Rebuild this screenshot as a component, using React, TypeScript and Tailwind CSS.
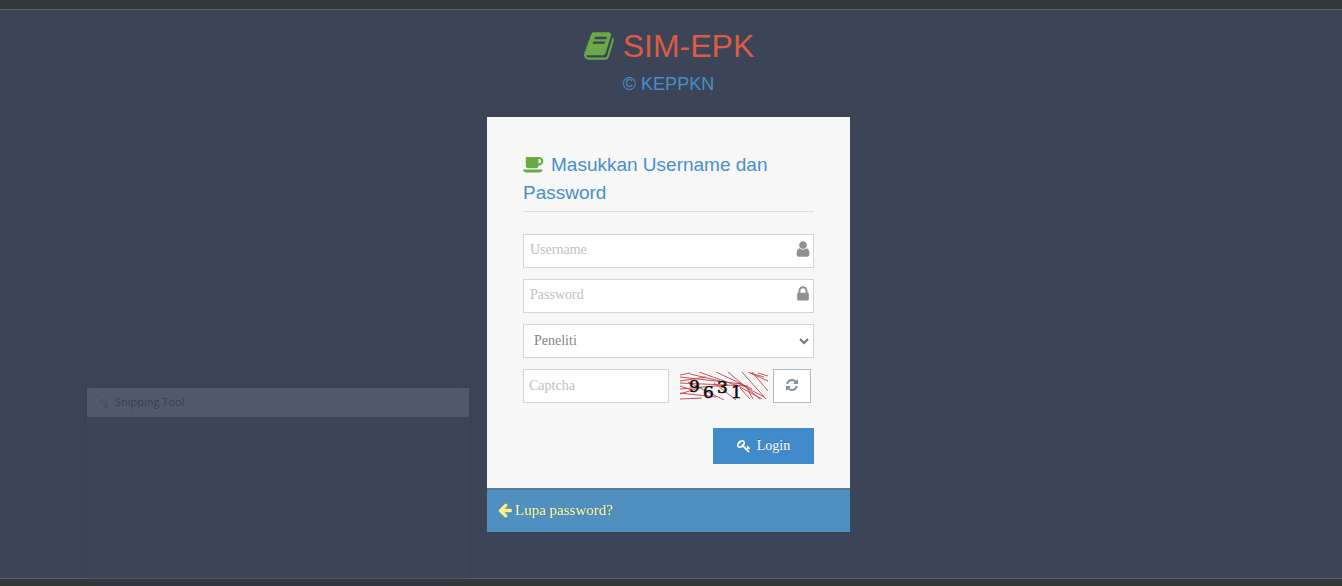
import React, { useState } from "react";

type IconProps = { className?: string };

function Glyph({ d, className, viewBox = "0 0 1792 1792" }: IconProps & { d: string; viewBox?: string }) {
  return (
    <svg viewBox={viewBox} fill="currentColor" aria-hidden="true" className={className}>
      <path d={d} />
    </svg>
  );
}

const BOOK =
  "M1703 478q40 57 18 129l-275 906q-19 64-76.5 107.5t-122.5 43.5h-923q-77 0-148.5-53.5t-99.5-131.5q-24-67-2-127 0-4 3-27t4-37q1-8-3-21.5t-3-19.5q2-11 8-21t16.5-23.5 16.5-23.5q23-38 45-91.5t30-91.5q3-10 .5-30t-.5-28q3-11 17-28t17-23q21-36 42-92t25-90q1-9-2.5-32t.5-28q4-13 22-30.5t22-22.5q19-26 42.5-84.5t27.5-96.5q1-8-3-25.5t-2-26.5q2-8 9-18t18-23 17-21q8-12 16.5-30.5t15-35 16-36 19.5-32 26.5-23.5 36-11.5 47.5 5.5l-1 3q38-9 51-9h761q74 0 114 56t18 130l-274 906q-36 119-71.5 153.5t-128.5 34.5h-869q-27 0-38 15-11 16-1 43 24 70 144 70h923q29 0 56-15.5t35-41.5l300-987q7-22 5-57 38 15 59 43zm-1064 2q-4 13 2 22.5t20 9.5h608q13 0 25.5-9.5t16.5-22.5l21-64q4-13-2-22.5t-20-9.5h-608q-13 0-25.5 9.5t-16.5 22.5zm-83 256q-4 13 2 22.5t20 9.5h608q13 0 25.5-9.5t16.5-22.5l21-64q4-13-2-22.5t-20-9.5h-608q-13 0-25.5 9.5t-16.5 22.5z";
const COFFEE =
  "M1664 640q0-80-56-136t-136-56h-64v384h64q80 0 136-56t56-136zm-1664 768h1792q0 106-75 181t-181 75h-1280q-106 0-181-75t-75-181zm1856-768q0 159-112.5 271.5t-271.5 112.5h-64v32q0 92-66 158t-158 66h-704q-92 0-158-66t-66-158v-736q0-26 19-45t45-19h1152q159 0 271.5 112.5t112.5 271.5z";
const USER =
  "M1536 1399q0 109-62.5 187t-150.5 78h-854q-88 0-150.5-78t-62.5-187q0-85 8.5-160.5t31.5-152 58.5-131 94-89 134.5-34.5q131 128 313 128t313-128q76 0 134.5 34.5t94 89 58.5 131 31.5 152 8.5 160.5zm-256-887q0 159-112.5 271.5t-271.5 112.5-271.5-112.5-112.5-271.5 112.5-271.5 271.5-112.5 271.5 112.5 112.5 271.5z";
const LOCK =
  "M640 768h512v-192q0-106-75-181t-181-75-181 75-75 181v192zm832 96v576q0 40-28 68t-68 28h-960q-40 0-68-28t-28-68v-576q0-40 28-68t68-28h32v-192q0-184 132-316t316-132 316 132 132 316v192h32q40 0 68 28t28 68z";
const REFRESH =
  "M1639 1056q0 5-1 7-64 268-268 434.5t-478 166.5q-146 0-282.5-55t-243.5-157l-129 129q-19 19-45 19t-45-19-19-45v-448q0-26 19-45t45-19h448q26 0 45 19t19 45-19 45l-137 137q71 66 161 102t187 36q134 0 250-65t186-179q11-17 53-117 8-23 30-23h192q13 0 22.5 9.5t9.5 22.5zm25-800v448q0 26-19 45t-45 19h-448q-26 0-45-19t-19-45 19-45l138-138q-148-137-349-137-134 0-250 65t-186 179q-11 17-53 117-8 23-30 23h-199q-13 0-22.5-9.5t-9.5-22.5v-7q65-268 270-434.5t480-166.5q146 0 284 55.5t245 156.5l130-129q19-19 45-19t45 19 19 45z";
const KEY =
  "M832 512q0-80-56-136t-136-56-136 56-56 136q0 42 19 83-41-19-83-19-80 0-136 56t-56 136 56 136 136 56 136-56 56-136q0-42-19-83 41 19 83 19 80 0 136-56t56-136zm851 704q0 17-49 66t-66 49q-9 0-28.5-16t-36.5-33-38.5-40-24.5-26l-96 96 220 220q28 28 28 68 0 42-39 81t-81 39q-40 0-68-28l-671-671q-176 131-365 131-163 0-265.5-102.5t-102.5-265.5q0-160 95-313t248-248 313-95q163 0 265.5 102.5t102.5 265.5q0 189-131 365l355 355 96-96q-3-3-26-24.5t-40-38.5-33-36.5-16-28.5q0-17 49-66t66-49q13 0 23 10 6 6 46 44.5t82 79.5 86.5 86 73 78 28.5 41z";
const ARROW_LEFT =
  "M1664 896v128q0 53-32.5 90.5t-84.5 37.5h-704l293 294q38 36 38 90t-38 90l-75 76q-37 37-90 37-52 0-91-37l-651-652q-37-37-37-90 0-52 37-91l651-650q38-38 91-38 52 0 90 38l75 74q38 38 38 91t-38 91l-293 293h704q52 0 84.5 37.5t32.5 90.5z";

function Captcha() {
  return (
    <svg viewBox="0 0 88 28" className="h-7 w-[88px] shrink-0" role="img" aria-label="Captcha 9631">
      <g stroke="#c4404a" strokeWidth="0.9" fill="none">
        <path d="M0 3L10 1M0 9L26 5M0 5L62 12M0 11L68 14M0 17L48 13M0 22L22 15M0 21L36 25M0 27L22 26M36 0L72 17M19 0L58 14L82 27M48 0L80 27M62 0L86 27M68 0L88 9M72 0L88 19M78 1L88 4M70 1L84 5M58 11L84 25M8 10L44 28M10 2L40 9M34 11L56 28M60 16L70 27M67 16L73 27M0 14L12 18" />
      </g>
      <g fill="#0a0a0a" stroke="#0a0a0a" strokeWidth="0.5" fontFamily="DejaVu Serif, serif" fontSize="17">
        <text x="9" y="20">9</text>
        <text x="23" y="26">6</text>
        <text x="37" y="21">3</text>
        <text x="51" y="26">1</text>
      </g>
    </svg>
  );
}

function SnippingGhost() {
  return (
    <div className="pointer-events-none absolute top-[378px] bottom-0 left-[87px] w-[382px] bg-[#3c4556] shadow-[0_0_6px_#37414f]">
      <div className="flex h-[29px] items-center gap-1 bg-[#4f596a] pl-2 font-['Open_Sans',sans-serif] text-[11px] text-[#363f4f]">
        <svg viewBox="0 0 16 16" className="size-4 shrink-0" fill="none" aria-hidden="true">
          <ellipse cx="8" cy="6.5" rx="6.5" ry="4.5" stroke="#605968" strokeWidth="1.5" />
          <path d="M2 10L10 3M5 5L13 13M14 2L9 9" stroke="#48536c" strokeWidth="1.3" />
          <circle cx="11" cy="11" r="2" stroke="#414b61" />
          <circle cx="3" cy="10" r="2" stroke="#65596a" />
        </svg>
        <span>Snipping Tool</span>
      </div>
    </div>
  );
}

const field =
  "block h-[34px] w-full rounded-none border border-[#d5d5d5] bg-white text-sm text-[#858585] outline-none placeholder:text-[#c0c0c0] focus:border-[#f59942]";

export default function App() {
  const [role, setRole] = useState("Peneliti");

  return (
    <div className="flex min-h-screen flex-col bg-[#3b4557] font-['Liberation_Serif',serif]">
      <div className="h-[10px] border-b border-[#5e626a] bg-[#353738]" />
      <main className="relative flex flex-1 flex-col items-center pt-4 pr-[5px] pb-[46px]">
        <SnippingGhost />
        <header className="relative flex flex-col items-center font-['Liberation_Sans',sans-serif]">
          <h1 className="flex items-center gap-2 text-[32px] leading-10 text-[#dd5a43]">
            <Glyph d={BOOK} className="size-8 text-[#69aa46]" />
            SIM-EPK
          </h1>
          <h4 className="mt-[6px] text-lg leading-6 text-[#478fca]">© KEPPKN</h4>
        </header>

        <section className="relative mt-[21px] w-full max-w-[363px] bg-[#f7f7f7]">
          <form className="px-9 pt-[34px] pb-6" onSubmit={(e) => e.preventDefault()}>
            <h4 className="border-b border-[#d5e3ef] pb-1 font-['Liberation_Sans',sans-serif] text-[19px] leading-7 text-[#478fca]">
              <Glyph
                d={COFFEE}
                viewBox="0 0 1920 1792"
                className="mr-[7px] inline-block h-5 w-[21px] align-[-3px] text-[#69aa46]"
              />
              Masukkan Username dan Password
            </h4>

            <div className="mt-[22px] flex flex-col gap-[11px]">
              <div className="relative">
                <input
                  type="text"
                  aria-label="Username"
                  placeholder="Username"
                  className={`${field} pr-7 pb-[2px] pl-[6px]`}
                />
                <Glyph d={USER} className="pointer-events-none absolute top-[6px] right-[2px] size-[18px] text-[#909090]" />
              </div>
              <div className="relative">
                <input
                  type="password"
                  aria-label="Password"
                  placeholder="Password"
                  className={`${field} pr-7 pb-[2px] pl-[6px]`}
                />
                <Glyph d={LOCK} className="pointer-events-none absolute top-[6px] right-[2px] size-[18px] text-[#909090]" />
              </div>
              <div className="relative">
                <select
                  aria-label="Level"
                  value={role}
                  onChange={(e) => setRole(e.target.value)}
                  className={`${field} appearance-none pr-7 pl-[10px]`}
                >
                  <option>Peneliti</option>
                </select>
                <svg
                  viewBox="0 0 10 7"
                  fill="none"
                  aria-hidden="true"
                  className="pointer-events-none absolute top-[14px] right-[5px] h-[7px] w-[10px]"
                >
                  <path d="M1 1L5 5L9 1" stroke="#747474" strokeWidth="2" />
                </svg>
              </div>
              <div className="flex items-center">
                <div className="w-[146px]">
                  <input type="text" aria-label="Captcha" placeholder="Captcha" className={`${field} px-[5px]`} />
                </div>
                <div className="ml-[11px] flex items-center gap-[5px]">
                  <Captcha />
                  <button
                    type="button"
                    aria-label="Muat ulang captcha"
                    className="flex h-[34px] w-[38px] cursor-pointer items-center justify-center border border-[#abbac3] bg-white pb-[2px] text-[#8090a0]"
                  >
                    <Glyph d={REFRESH} className="size-[14px]" />
                  </button>
                </div>
              </div>
            </div>

            <div className="mt-[25px] flex justify-end">
              <button
                type="submit"
                className="flex h-9 w-[101px] cursor-pointer items-center justify-center gap-[6px] bg-[#428bca] text-sm text-white text-shadow-[0_-1px_0_rgb(0_0_0/0.25)]"
              >
                <Glyph d={KEY} className="size-[14px]" />
                Login
              </button>
            </div>
          </form>

          <footer className="flex h-11 items-center border-t-2 border-[#597597] bg-[#5090c1] px-[10px] pb-[2px]">
            <a
              href="#lupa-password"
              className="flex items-center gap-[2px] text-[15px] text-[#ffffaa] text-shadow-[1px_0_1px_rgb(0_0_0/0.25)]"
            >
              <Glyph d={ARROW_LEFT} className="size-4 text-[#ffee88]" />
              Lupa password?
            </a>
          </footer>
        </section>
      </main>
      <div className="h-2 border-t border-[#5e626a] bg-[#35363c]" />
    </div>
  );
}
